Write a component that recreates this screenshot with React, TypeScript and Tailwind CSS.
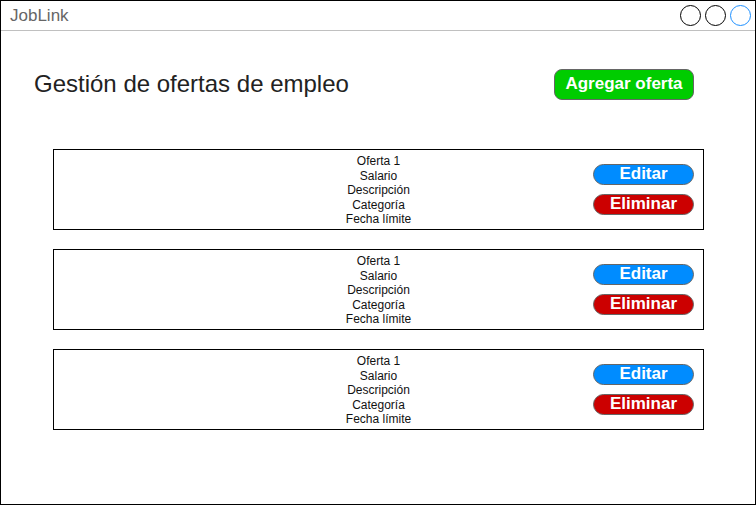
const offers = [1, 2, 3];

function OfferCard() {
  return (
    <div className="relative h-[81px] w-[651px] border border-black bg-white">
      <div className="flex flex-col items-center pt-[4px] text-[12px] leading-[14.5px] text-[#111]">
        <span>Oferta 1</span>
        <span>Salario</span>
        <span>Descripción</span>
        <span>Categoría</span>
        <span>Fecha límite</span>
      </div>
      <div className="absolute right-[9px] top-[14px] flex flex-col gap-[9px]">
        <button className="h-[21px] w-[101px] rounded-full border border-[#666] bg-[#008cff] pb-[2px] text-[17px] font-bold leading-[16px] text-white">
          Editar
        </button>
        <button className="h-[21px] w-[101px] rounded-full border border-[#666] bg-[#cc0000] pb-[2px] text-[17px] font-bold leading-[16px] text-white">
          Eliminar
        </button>
      </div>
    </div>
  );
}

export default function App() {
  return (
    <div
      className="h-[505px] w-[756px] border border-black bg-white"
      style={{ fontFamily: '"Liberation Sans", Arial, sans-serif' }}
    >
      {/* title bar */}
      <div className="flex h-[30px] items-center justify-between border-b border-[#c0c0c0] pl-[9px] pr-[4px]">
        <span className="text-[17px] text-[#666]">JobLink</span>
        <div className="flex gap-[4px]">
          <div className="h-[21px] w-[21px] rounded-full border-[1.5px] border-black" />
          <div className="h-[21px] w-[21px] rounded-full border-[1.5px] border-black" />
          <div className="h-[21px] w-[21px] rounded-full border-[1.5px] border-[#1e90ff]" />
        </div>
      </div>

      <div className="mt-[38px] flex h-[31px] items-center justify-between pl-[33px] pr-[61px]">
        <h1 className="mb-[2px] text-[24px] text-[#222]">Gestión de ofertas de empleo</h1>
        <button className="h-[31px] w-[140px] rounded-[8px] border border-[#666] bg-[#00cc00] pb-[2px] text-[17px] font-bold leading-[24px] text-white">
          Agregar oferta
        </button>
      </div>

      <div className="ml-[52px] mt-[49px] flex flex-col gap-[19px]">
        {offers.map((o) => (
          <OfferCard key={o} />
        ))}
      </div>
    </div>
  );
}
